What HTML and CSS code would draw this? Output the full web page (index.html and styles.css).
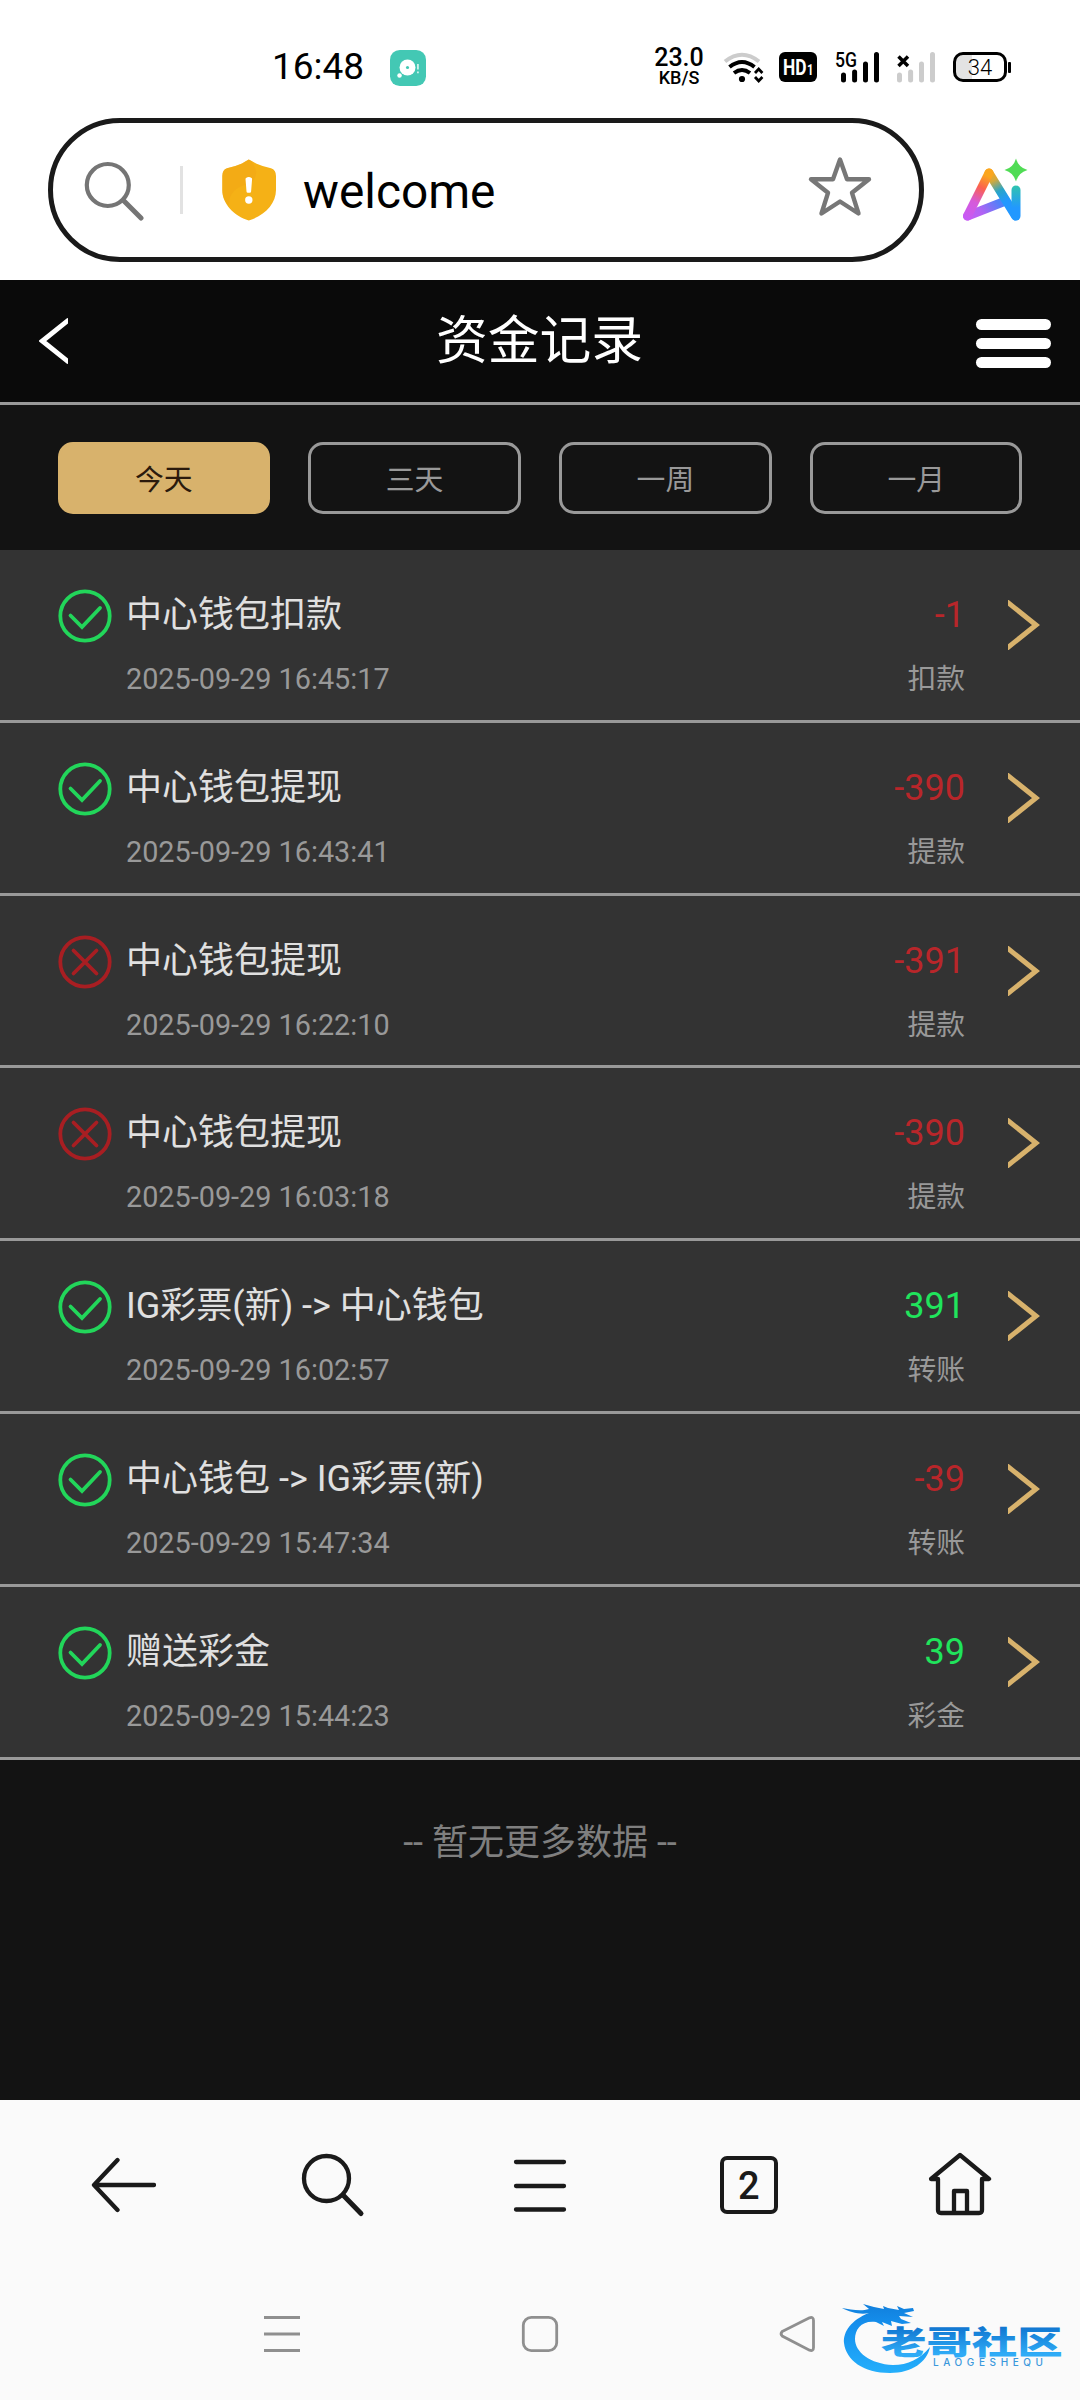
FILE: index.html
```html
<!DOCTYPE html>
<html lang="zh-CN">
<head>
<meta charset="utf-8">
<title>资金记录</title>
<link rel="stylesheet" href="styles.css">
</head>
<body>
<svg class="defs" width="0" height="0" aria-hidden="true">
  <symbol id="ok" viewBox="0 0 54 54"><circle cx="27" cy="27" r="24.7"/><path d="M12.5 26.5 24 38 42 19"/></symbol>
  <symbol id="fail" viewBox="0 0 54 54"><circle cx="27" cy="27" r="24.7"/><path d="M15.5 15.5l23 23M38.5 15.500l-23 23"/></symbol>
  <symbol id="go" viewBox="0 0 32 50"><path d="M-2 1 28 25-2 49"/></symbol>
</svg>

<header class="status">
  <span class="clock">16:48</span>
  <svg class="app" viewBox="0 0 37 37"><rect width="37" height="37" rx="10" fill="#43c8b4"/><circle cx="18" cy="18" r="8.2" fill="#fff"/><circle cx="18" cy="18" r="1.6" fill="#43c8b4"/><circle cx="9.8" cy="26.3" r="2.3" fill="#fff"/><path d="M28.7 14.5v5.5M28.7 22v2" stroke="#d4f3ee" stroke-width="1.8"/></svg>
  <div class="speed"><b>23.0</b><i>KB/S</i></div>
  <svg class="wifi" viewBox="722 48 44 38" fill="none" stroke="#000" stroke-width="4"><path d="M725 61.500Q742 48 759 61.500" stroke="#ccc"/><path d="M729.500 67Q742 57 754.500 67"/><path d="M734 73Q742 67 750 73"/><circle cx="742" cy="79" r="3.100" fill="#000" stroke="none"/><path d="M755 73l3.700-4 3.700 4M755 77l3.700 4 3.700-4" stroke-width="2.800"/></svg>
  <svg class="hd" viewBox="0 0 38 30"><rect width="38" height="30" rx="6"/><text x="4" y="23" textLength="23.500" lengthAdjust="spacingAndGlyphs">HD</text><text class="one" x="28" y="23" textLength="6.500" lengthAdjust="spacingAndGlyphs">1</text></svg>
  <svg class="signal" viewBox="834 48 48 38"><text class="net" x="835" y="66.500" textLength="22" lengthAdjust="spacingAndGlyphs">5G</text><path d="M843.500 75v5M854.600 72v8M865.500 64v16M876.500 54.500v25.500" stroke="#000" stroke-width="5" stroke-linecap="round"/></svg>
  <svg class="signal2" viewBox="894 48 44 38"><path d="M898.500 56.500l9.500 9.500M908 56.500l-9.500 9.500" stroke="#000" stroke-width="3.500"/><path d="M899.500 75v5M910.600 72v8M921.500 64v16M932.500 54.500v25.500" stroke="#ccc" stroke-width="5" stroke-linecap="round"/></svg>
  <div class="battery"><span>34</span></div>
</header>

<div class="address">
  <div class="pill">
    <svg class="find" viewBox="83 158 62 62" fill="none" stroke="#757575"><circle cx="107.800" cy="184" r="21" stroke-width="4.200"/><path d="M123.500 199.500 141 217" stroke-width="5" stroke-linecap="round"/></svg>
    <i class="rule"></i>
    <svg class="shield" viewBox="221 158 56 64"><path d="M248.800 159.500Q252 161 256 163.500 264 167 271 168.300 276 170 276 176V190C276 204 264 216 248.800 220.500 234 216 222.300 204 222.300 190V176Q222.300 170 227 168.300 234 167 242 163.500 246 161 248.800 159.500Z" fill="#f5b116"/><path d="M242 163.500Q246 161 248.800 159.500 253 161 256 171 257 179 249 184 228 188 229 206C224 201 222.300 195 222.300 190V176Q222.300 170 227 168.300 234 167 242 163.500Z" fill="#f1a615" opacity=".55"/><path d="M246.800 179 247.800 191.500h2L250.800 179q-2-1.500-4 0Z" fill="#fff" stroke="#fff" stroke-width="2.600" stroke-linejoin="round"/><circle cx="248.800" cy="200" r="3.700" fill="#fff"/></svg>
    <span class="url">welcome</span>
    <svg class="star" viewBox="807 155 66 64"><path d="M840 159.500 847 179.200H869L852 192.800 858.500 213.500 840 201.500 821.500 213.500 828 192.800 811 179.200H833Z" fill="none" stroke="#777" stroke-width="4.400" stroke-linejoin="round"/></svg>
  </div>
  <svg class="ai" viewBox="960 155 72 68">
    <defs><linearGradient id="g" gradientUnits="userSpaceOnUse" x1="966" y1="218" x2="1008" y2="185"><stop offset="0" stop-color="#c95cf2"/><stop offset=".3" stop-color="#b163f4"/><stop offset=".65" stop-color="#557ff8"/><stop offset="1" stop-color="#2099fb"/></linearGradient>
    <linearGradient id="l" gradientUnits="userSpaceOnUse" x1="966" y1="218" x2="989" y2="171"><stop offset="0" stop-color="#c75af5"/><stop offset=".35" stop-color="#d65ad9"/><stop offset=".65" stop-color="#fb614f"/><stop offset=".9" stop-color="#fba61e"/></linearGradient>
    <linearGradient id="r" gradientUnits="userSpaceOnUse" x1="989" y1="171" x2="1014" y2="218"><stop offset="0" stop-color="#fba61e"/><stop offset=".2" stop-color="#d4a93c"/><stop offset=".42" stop-color="#28a5c8"/><stop offset=".65" stop-color="#2298ff"/></linearGradient>
    <linearGradient id="v" gradientUnits="userSpaceOnUse" x1="1016" y1="186" x2="1016" y2="208"><stop offset="0" stop-color="#2fc3b0"/><stop offset="1" stop-color="#2298ff"/></linearGradient></defs>
    <g fill="none" stroke-width="9" stroke-linecap="round"><path d="M967.500 216 1003 202" stroke="url(#g)"/><path d="M989 173 1015.500 216" stroke="url(#r)"/><path d="M967.500 216 989 173" stroke="url(#l)"/><path d="M1016 190V216" stroke="url(#v)"/></g>
    <path d="M1016 158.500Q1018.500 167.500 1027.500 170 1018.500 172.500 1016 181.500 1013.500 172.500 1004.500 170 1013.500 167.500 1016 158.500Z" fill="#50dc55"/>
  </svg>
</div>

<main class="page">
  <div class="head">
    <svg class="back" viewBox="0 0 30 46"><path d="M31 1 3.500 23 31 45"/></svg>
    <h1>资金记录</h1>
    <div class="burger"><i></i><i></i><i></i></div>
  </div>
  <nav class="filters"><a class="on">今天</a><a>三天</a><a>一周</a><a>一月</a></nav>
  <ul class="list">
    <li><svg class="state ok"><use href="#ok"/></svg><div class="info"><p>中心钱包扣款</p><time>2025-09-29 16:45:17</time></div><div class="sum"><p class="minus">-1</p><span>扣款</span></div><svg class="go"><use href="#go"/></svg></li>
    <li><svg class="state ok"><use href="#ok"/></svg><div class="info"><p>中心钱包提现</p><time>2025-09-29 16:43:41</time></div><div class="sum"><p class="minus">-390</p><span>提款</span></div><svg class="go"><use href="#go"/></svg></li>
    <li><svg class="state fail"><use href="#fail"/></svg><div class="info"><p>中心钱包提现</p><time>2025-09-29 16:22:10</time></div><div class="sum"><p class="minus">-391</p><span>提款</span></div><svg class="go"><use href="#go"/></svg></li>
    <li><svg class="state fail"><use href="#fail"/></svg><div class="info"><p>中心钱包提现</p><time>2025-09-29 16:03:18</time></div><div class="sum"><p class="minus">-390</p><span>提款</span></div><svg class="go"><use href="#go"/></svg></li>
    <li><svg class="state ok"><use href="#ok"/></svg><div class="info"><p>IG彩票(新) -&gt; 中心钱包</p><time>2025-09-29 16:02:57</time></div><div class="sum"><p class="plus">391</p><span>转账</span></div><svg class="go"><use href="#go"/></svg></li>
    <li><svg class="state ok"><use href="#ok"/></svg><div class="info"><p>中心钱包 -&gt; IG彩票(新)</p><time>2025-09-29 15:47:34</time></div><div class="sum"><p class="minus">-39</p><span>转账</span></div><svg class="go"><use href="#go"/></svg></li>
    <li><svg class="state ok"><use href="#ok"/></svg><div class="info"><p>赠送彩金</p><time>2025-09-29 15:44:23</time></div><div class="sum"><p class="plus">39</p><span>彩金</span></div><svg class="go"><use href="#go"/></svg></li>
  </ul>
  <p class="end">-- 暂无更多数据 --</p>
</main>

<footer class="bottom">
  <nav class="tools">
    <a><svg viewBox="-35 -34 68 68"><path d="M31 0H-28M-5.500-25-29 0-5.500 25"/></svg></a>
    <a><svg viewBox="-35 -34 68 68"><circle cx="-5.500" cy="-6.500" r="22.500"/><path d="M11.500 10.500 29 28.500" stroke-width="5"/></svg></a>
    <a><svg viewBox="-34 -34 68 68"><path d="M-24-23H24M-24 1H24M-24 24.500H24"/></svg></a>
    <a><span class="tabs">2</span></a>
    <a><svg viewBox="-34 -34 68 68"><path d="M2-30 31-6H24V25Q24 28 21 28H-17Q-20 28-20 25V-6H-27ZM-4 28V6H9V28"/></svg></a>
  </nav>
  <nav class="system">
    <a><svg viewBox="0 0 40 40"><path d="M2 3.500H38M2 20H38M2 36.500H38"/></svg></a>
    <a><svg viewBox="0 0 40 40"><rect x="3.300" y="3.300" width="33.400" height="33.400" rx="8"/></svg></a>
    <a><svg viewBox="0 0 40 40"><path d="M4.200 17.500 31.500 3.800Q35.500 2.500 35.500 6.500V33.500Q35.500 37.500 31.500 36.200L4.200 22Q2 20 4.200 17.500Z"/></svg></a>
  </nav>
  <svg class="mark" viewBox="836 2298 236 84">
    <defs><linearGradient id="m" gradientUnits="userSpaceOnUse" x1="0" y1="2305" x2="0" y2="2375"><stop offset="0" stop-color="#1180dd"/><stop offset=".3" stop-color="#1590ee"/><stop offset="1" stop-color="#25b0fc"/></linearGradient>
    <linearGradient id="t" x1="0" y1="0" x2="0" y2="1"><stop offset=".25" stop-color="#1278d2"/><stop offset=".8" stop-color="#2fabf6"/></linearGradient></defs>
    <path fill="url(#m)" d="M869 2313C851 2320 843 2332 844 2343 846 2360 863 2373 890 2373 912 2373 927 2362 930 2347 920 2359 908 2365 893 2365 870 2364 855 2352 855 2339 855 2329 862 2320 876 2322L884 2326 882 2322 892 2326 891 2321 902 2324 911 2323 901 2319 899 2316 913 2317 904 2313 914 2311 913 2308 904 2309 897 2306 899 2310 888 2308 883 2306 884 2309 874 2307 863 2304 869 2309C860 2312 850 2309 842 2308 850 2312 860 2315 869 2313Z"/>
    <text class="brand" transform="translate(881 2354) scale(1.420 1)" fill="url(#t)">老哥社区</text>
    <text class="latin" x="933" y="2366" textLength="110">LAOGESHEQU</text>
  </svg>
</footer>
</body>
</html>
```
FILE: styles.css
```css
* { box-sizing: border-box; }
body {
  margin: 0;
  width: 1080px;
  height: 2400px;
  display: flex;
  flex-direction: column;
  overflow: hidden;
  background: #fff;
  font-family: Roboto, "Noto Sans CJK SC", sans-serif;
}
h1, p, ul { margin: 0; padding: 0; font-weight: 400; }
ul { list-style: none; }
svg { display: block; flex: none; }
.defs { position: absolute; }

/* Status bar */
.status {
  height: 118px;
  padding: 16px 69px 0 272px;
  display: flex;
  align-items: center;
  flex: none;
  color: #000;
}
.clock { width: 118px; font-size: 37px; line-height: 44px; }
.app { width: 36px; height: 36px; margin-top: 2px; }
.speed { width: 50px; margin-left: 228px; text-align: center; }
.speed b { display: block; font-size: 25px; font-weight: 500; line-height: 20px; }
.speed i { display: block; font-size: 18px; font-style: normal; font-weight: 500; line-height: 19px; }
.wifi { width: 44px; height: 38px; margin-left: 18px; }
.hd { width: 38px; height: 30px; margin-left: 13px; }
.hd text { font-size: 22.500px; font-weight: 700; fill: #fff; }
.hd .one { font-size: 14px; }
.signal { width: 48px; height: 38px; margin-left: 17px; }
.net { font-size: 19.500px; font-weight: 500; }
.signal2 { width: 44px; height: 38px; margin-left: 12px; }
.battery {
  position: relative;
  width: 54px;
  height: 30px;
  margin-left: 15px;
  border: 3px solid #000;
  border-radius: 10px;
  background: linear-gradient(90deg, #e3e3e3 16px, #fff 16px);
  font-size: 22px;
  font-weight: 300;
  line-height: 25px;
  text-align: center;
}
.battery::after {
  content: "";
  position: absolute;
  left: 52px;
  top: 7px;
  width: 3px;
  height: 11px;
  border-radius: 1px;
  background: #000;
}

/* Address bar */
.address { height: 162px; padding-left: 48px; display: flex; flex: none; }
.pill {
  width: 876px;
  height: 144px;
  padding: 0 46px 0 30px;
  display: flex;
  align-items: center;
  border: 5px solid #1a1a1a;
  border-radius: 72px;
}
.find { width: 62px; height: 62px; }
.rule { width: 3px; height: 48px; margin-left: 35px; background: #e2e2e2; }
.shield { width: 56px; height: 64px; margin-left: 38px; }
.url { margin: 4px auto 0 26px; font-size: 47.800px; line-height: 60px; color: #000; }
.star { width: 66px; height: 64px; margin-bottom: 6px; }
.ai { width: 72px; height: 68px; margin: 37px 0 0 36px; }

/* Page */
.page { height: 1820px; flex: none; background: #131313; }
.head {
  height: 125px;
  padding: 0 29px 0 39px;
  display: flex;
  justify-content: space-between;
  align-items: center;
  border-bottom: 3px solid #999;
  background: #0a0a0a;
}
.head h1 { padding: 2px 0 0 35px; font-size: 51.800px; line-height: 120px; color: #fff; }
.back { width: 29px; height: 46px; fill: none; stroke: #fff; stroke-width: 5; }
.burger { width: 75px; height: 49px; margin-top: 4px; display: flex; flex-direction: column; justify-content: space-between; }
.burger i { height: 11px; border-radius: 5.500px; background: #fff; }
.filters { height: 145px; padding: 37px 57.600px 36px; display: flex; gap: 38.400px; }
.filters a {
  flex: 1;
  border: 3px solid #999;
  border-radius: 15px;
  font-size: 28.800px;
  line-height: 70px;
  text-align: center;
  color: #999;
}
.filters .on { border-color: #d8b26c; background: #d8b26c; color: #2b1a0c; }
.list li {
  height: 172.800px;
  padding: 39px 40px 0 58px;
  display: flex;
  align-items: flex-start;
  border-bottom: 3px solid #999;
  background: #333;
}
.state { width: 54px; height: 54px; margin: 0 14px 0 0; fill: none; stroke-width: 3.800; stroke-linecap: round; }
.state.ok { stroke: #22d65a; }
.state.fail { stroke: #a81e22; }
.info { flex: 1; }
.list p { font-size: 36px; line-height: 53px; color: #e0e0e0; white-space: nowrap; }
.list time, .list span { display: block; margin-top: 17px; font-size: 28.800px; line-height: 40px; color: #999; }
.sum { text-align: right; }
.list .minus { color: #b9262a; }
.list .plus { color: #20e45c; }
.go { width: 32px; height: 50px; margin: 11px 0 0 43px; fill: none; stroke: #d8b26c; stroke-width: 5; }
.end { padding-top: 57px; font-size: 36px; line-height: 53px; text-align: center; color: #7f7f7f; }

/* Browser toolbar and system navigation */
.bottom { position: relative; flex: 1; background: #fafafa; }
.tools { height: 170px; padding: 0 18px; display: flex; align-items: center; }
.tools a, .system a { flex: 1; display: flex; justify-content: center; }
.tools svg { width: 68px; height: 68px; fill: none; stroke: #1a1a1a; stroke-width: 4.300; stroke-linecap: round; stroke-linejoin: round; }
.tabs {
  width: 58px;
  height: 58px;
  border: 4px solid #1a1a1a;
  border-radius: 7px;
  font-size: 38px;
  font-weight: 500;
  line-height: 53px;
  text-align: center;
  color: #1a1a1a;
}
.system { height: 130px; padding: 0 153px; display: flex; align-items: center; }
.system a { margin-bottom: 2px; }
.system svg { width: 40px; height: 40px; fill: none; stroke: #8f8f8f; stroke-width: 2.800; }
.mark { position: absolute; left: 836px; top: 198px; width: 236px; height: 84px; }
.brand { font: 900 32px "Noto Sans CJK SC", sans-serif; }
.latin { font: 500 10px Inter, sans-serif; fill: #3a98dc; }
```
